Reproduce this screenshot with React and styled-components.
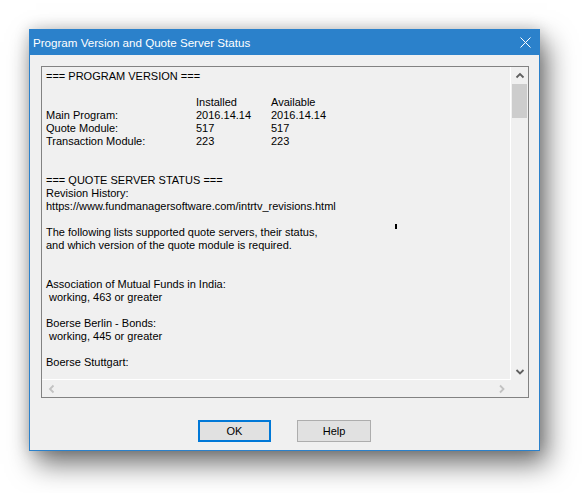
import React from "react";
import styled, { createGlobalStyle } from "styled-components";

const Global = createGlobalStyle`
  html, body { margin: 0; padding: 0; background: #ffffff; }
  body { width: 582px; height: 493px; overflow: hidden; }
`;

const Page = styled.div`
  padding: 29px 0 0 29px;
`;

const Window = styled.div`
  width: 511px;
  box-sizing: border-box;
  border: 1px solid #2b81cb;
  background: #f0f0f0;
  box-shadow: 7px 13px 26px rgba(0, 0, 0, 0.55), 0 0 14px rgba(0, 0, 0, 0.18);
  display: flex;
  flex-direction: column;
`;

const TitleBar = styled.div`
  height: 25px;
  background: #2b81cb;
  display: flex;
  align-items: center;
  justify-content: space-between;
  padding: 1px 9px 0 3px;
  margin: -1px -1px 0 -1px;
`;

const Title = styled.div`
  color: #ffffff;
  font-family: "Liberation Sans", Arial, sans-serif;
  font-size: 11.6px;
  padding-left: 1px;
`;

const CloseIcon = styled.svg`
  width: 11px;
  height: 11px;
  display: block;
`;

const Body = styled.div`
  padding: 11px 10px 8px 11px;
  display: flex;
  flex-direction: column;
`;

const Frame = styled.div`
  height: 332px;
  box-sizing: border-box;
  border: 1px solid #828282;
  display: grid;
  grid-template-columns: 1fr 17px;
  grid-template-rows: 1fr 17px;
`;

const TextArea = styled.div`
  position: relative;
  overflow: hidden;
  border-right: 1px solid #ffffff;
  border-bottom: 1px solid #ffffff;
  padding: 3px 4px 0 4px;
  font-family: "Liberation Sans", Arial, sans-serif;
  font-size: 11px;
  line-height: 13px;
  color: #000000;
`;

const Line = styled.div`
  height: 13px;
  white-space: pre;
`;

const VersionRow = styled.div`
  display: grid;
  grid-template-columns: 150px 75px auto;
  height: 13px;
  white-space: pre;
`;

const Cursor = styled.div`
  position: absolute;
  left: 353px;
  top: 157px;
  width: 2px;
  height: 5px;
  background: #000;
`;

const VScroll = styled.div`
  display: flex;
  flex-direction: column;
  align-items: center;
  background: #f0f0f0;
`;

const ArrowBox = styled.div`
  height: 17px;
  width: 17px;
  display: flex;
  align-items: center;
  justify-content: center;
`;

const Track = styled.div`
  flex: 1;
  width: 100%;
  display: flex;
  flex-direction: column;
  align-items: center;
`;

const Thumb = styled.div`
  width: 15px;
  height: 34px;
  background: #cdcdcd;
`;

const HScroll = styled.div`
  display: flex;
  justify-content: space-between;
  align-items: center;
  padding: 0 1px;
`;

const Corner = styled.div`
  background: #f0f0f0;
`;

const ButtonRow = styled.div`
  margin-top: 22px;
  display: flex;
  justify-content: center;
  gap: 26px;
  padding-right: 1px;
`;

const Button = styled.button`
  width: ${(p) => (p.$primary ? 73 : 74)}px;
  height: 22px;
  box-sizing: border-box;
  margin: 0;
  padding: 0;
  background: #e1e1e1;
  border: ${(p) => (p.$primary ? "2px solid #0078d7" : "1px solid #adadad")};
  font-family: "Liberation Sans", Arial, sans-serif;
  font-size: 11px;
  color: #000;
  display: flex;
  align-items: center;
  justify-content: center;
`;

const Chevron = ({ dir, color }) => {
  const paths = {
    up: "M1.5 5.5 L5 2 L8.5 5.5",
    down: "M1.5 2 L5 5.5 L8.5 2",
    left: "M5.5 1.5 L2 5 L5.5 8.5",
    right: "M2 1.5 L5.5 5 L2 8.5",
  };
  const vertical = dir === "up" || dir === "down";
  return (
    <svg
      width={vertical ? 10 : 8}
      height={vertical ? 8 : 10}
      viewBox={vertical ? "0 0 10 8" : "0 0 8 10"}
    >
      <path d={paths[dir]} fill="none" stroke={color} strokeWidth="1.8" />
    </svg>
  );
};

const versionRows = [
  ["", "Installed", "Available"],
  ["Main Program:", "2016.14.14", "2016.14.14"],
  ["Quote Module:", "517", "517"],
  ["Transaction Module:", "223", "223"],
];

const serverLines = [
  "",
  "",
  "=== QUOTE SERVER STATUS ===",
  "Revision History:",
  "https://www.fundmanagersoftware.com/intrtv_revisions.html",
  "",
  "The following lists supported quote servers, their status,",
  "and which version of the quote module is required.",
  "",
  "",
  "Association of Mutual Funds in India:",
  " working, 463 or greater",
  "",
  "Boerse Berlin - Bonds:",
  " working, 445 or greater",
  "",
  "Boerse Stuttgart:",
];

export default function App() {
  return (
    <>
      <Global />
      <Page>
        <Window>
          <TitleBar>
            <Title>Program Version and Quote Server Status</Title>
            <CloseIcon viewBox="0 0 11 11">
              <path d="M0.5 0.5 L10.5 10.5 M10.5 0.5 L0.5 10.5" stroke="#ffffff" strokeWidth="1" fill="none" />
            </CloseIcon>
          </TitleBar>
          <Body>
            <Frame>
              <TextArea>
                <Line>=== PROGRAM VERSION ===</Line>
                <Line />
                {versionRows.map((r, i) => (
                  <VersionRow key={i}>
                    <span>{r[0]}</span>
                    <span>{r[1]}</span>
                    <span>{r[2]}</span>
                  </VersionRow>
                ))}
                {serverLines.map((l, i) => (
                  <Line key={i}>{l}</Line>
                ))}
                <Cursor />
              </TextArea>
              <VScroll>
                <ArrowBox>
                  <Chevron dir="up" color="#606060" />
                </ArrowBox>
                <Track>
                  <Thumb />
                </Track>
                <ArrowBox>
                  <Chevron dir="down" color="#606060" />
                </ArrowBox>
              </VScroll>
              <HScroll>
                <ArrowBox>
                  <Chevron dir="left" color="#c2c2c2" />
                </ArrowBox>
                <ArrowBox>
                  <Chevron dir="right" color="#c2c2c2" />
                </ArrowBox>
              </HScroll>
              <Corner />
            </Frame>
            <ButtonRow>
              <Button $primary>OK</Button>
              <Button>Help</Button>
            </ButtonRow>
          </Body>
        </Window>
      </Page>
    </>
  );
}
